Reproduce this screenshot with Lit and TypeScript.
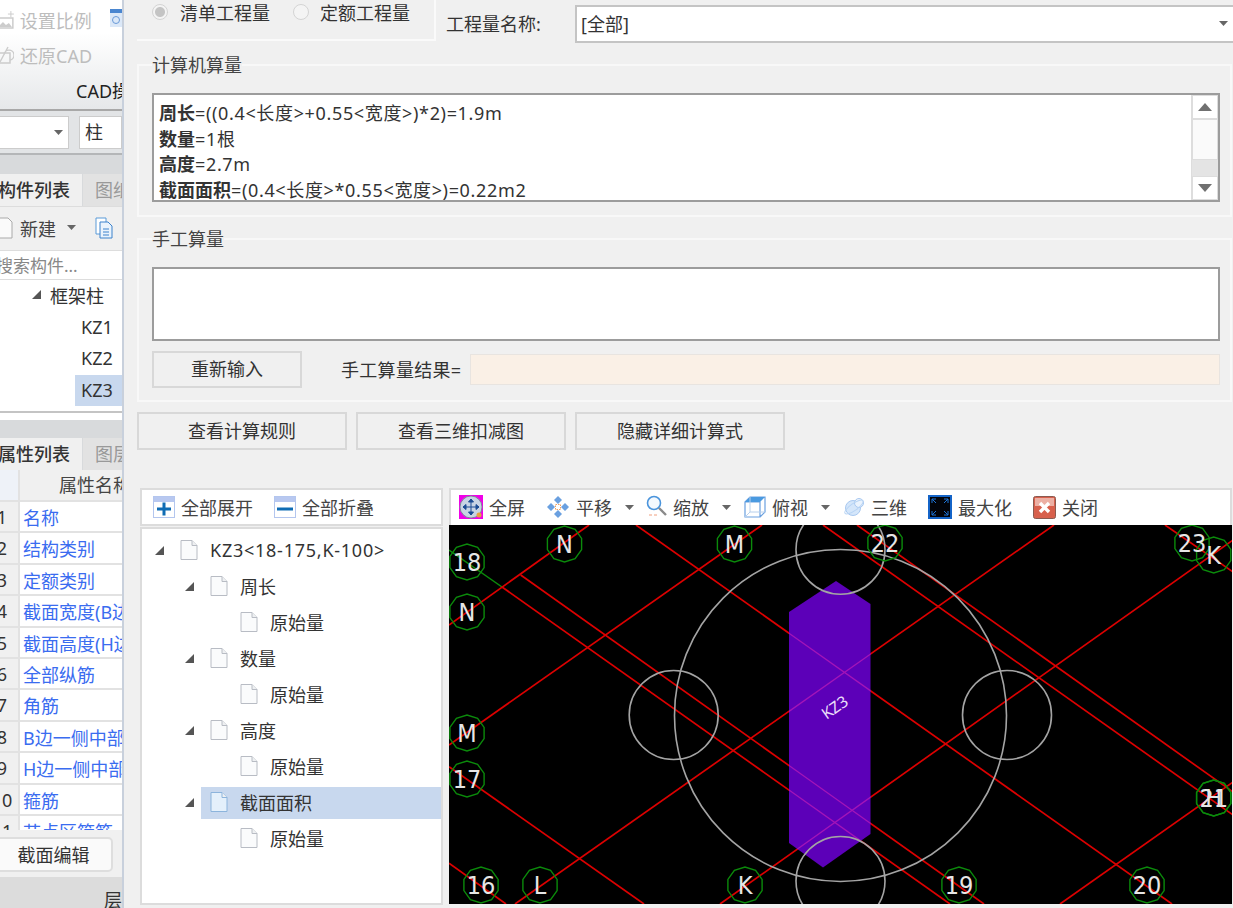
import { LitElement, css, html, svg } from "lit";
import { customElement } from "lit/decorators.js";

const FONT = css`"Noto Sans", "Noto Sans CJK SC", sans-serif`;

const doc = (blue = false) => html`<svg class="doc" width="18" height="22" viewBox="0 0 18 22">
  <path d="M1 1.5h11l5 5v14H1z" fill=${blue ? "#e4f0fb" : "#fafbfc"} stroke=${blue ? "#8cb4dc" : "#b8bcc4"} />
  <path d="M12 1.5v5h5" fill="#eef0f2" stroke=${blue ? "#8cb4dc" : "#b8bcc4"} />
</svg>`;

const arrow = html`<svg class="tri" width="11" height="11" viewBox="0 0 11 11"><path d="M1 10L10 1v9z" fill="#555" /></svg>`;
const drop = html`<svg class="drop" width="9" height="5" viewBox="0 0 9 5"><path d="M0 0h9L4.5 5z" fill="#666" /></svg>`;

@customElement("side-panel")
export class SidePanel extends LitElement {
  rows = [
    "名称", "结构类别", "定额类别", "截面宽度(B边)", "截面高度(H边)", "全部纵筋",
    "角筋", "B边一侧中部筋", "H边一侧中部筋", "箍筋", "节点区箍筋",
  ];

  render() {
    return html`
      <div class="ribbon">
        <div class="rrow">
          <svg width="14" height="20" viewBox="0 0 14 20"><path d="M-4 8h17v10H-4z" fill="none" stroke="#ccc" stroke-width="1.5" /><path d="M-2 17l5-5 3 3 3-2 3 4z" fill="#ccc" /><path d="M11 1v6M8 4h6" stroke="#ccc" /></svg>
          <span class="t">设置比例</span>
          <svg class="cal" width="12" height="18" viewBox="0 0 12 18"><path d="M0 0h14v18H0z" fill="#dbe8f8" /><path d="M0 0h14v4H0z" fill="#4a86d0" /><circle cx="6" cy="11" r="3.5" fill="none" stroke="#6a9ad8" /></svg>
        </div>
        <div class="rrow">
          <svg width="14" height="20" viewBox="0 0 14 20"><path d="M-3 8h13v10H-3z" fill="none" stroke="#ccc" stroke-width="1.5" /><path d="M8 2l-8 15M4 10a5 5 0 1 1 6 5" fill="none" stroke="#ccc" stroke-width="1.4" /></svg>
          <span class="t">还原CAD</span>
        </div>
        <div class="cap">CAD操作</div>
      </div>
      <div class="combos">
        <div class="combo first">${drop}</div>
        <div class="combo second">柱</div>
      </div>
      <div class="band"></div>
      <div class="tabs"><div class="tab on">构件列表</div><div class="tab">图纸管理</div></div>
      <div class="tools">
        <svg width="14" height="24" viewBox="0 0 14 24"><path d="M-4 2h12l4 4v16H-4z" fill="#fafafa" stroke="#aaa" /></svg>
        <span class="new">新建</span>${drop}
        <svg class="blue" width="18" height="22" viewBox="0 0 18 22"><path d="M1 1h10v16H1z" fill="#fff" stroke="#5b9bd8" /><path d="M5 5h8l4 4v12H5z" fill="#eaf3fc" stroke="#3c82cc" /><path d="M8 12h6M8 15h6M8 18h6" stroke="#3c82cc" /></svg>
      </div>
      <div class="search">搜索构件...</div>
      <div class="tree">
        <div class="node lv1">${arrow}<span>框架柱</span></div>
        <div class="node lv2"><span>KZ1</span></div>
        <div class="node lv2"><span>KZ2</span></div>
        <div class="node lv2"><span class="sel">KZ3</span></div>
      </div>
      <div class="band low"></div>
      <div class="tabs"><div class="tab on">属性列表</div><div class="tab">图层管理</div></div>
      <div class="table">
        <div class="idx head"></div>
        <div class="hname">属性名称</div>
        ${this.rows.map(
          (r, i) => html`<div class="idx">${i + 1}</div><div class="name">${r}</div>`,
        )}
      </div>
      <div class="actions"><div class="edit">截面编辑</div></div>
      <div class="foot">层间复制</div>
    `;
  }

  static styles = css`
    :host {
      display: block;
      width: 122px;
      height: 908px;
      overflow: hidden;
      background: #f0f0f0;
      font-family: ${FONT};
      font-size: 18px;
      color: #333;
      white-space: nowrap;
    }
    .ribbon {
      height: 109px;
      padding-top: 2px;
      box-sizing: border-box;
      background: linear-gradient(#fff 30%, #e6e8ea);
      overflow: hidden;
    }
    .rrow {
      height: 35px;
      display: flex;
      align-items: center;
      gap: 6px;
    }
    .rrow .t {
      color: #bdbdbd;
      width: 85px;
    }
    .cal {
      flex: none;
      margin-top: -4px;
    }
    .cap {
      height: 36px;
      line-height: 38px;
      padding-left: 76px;
      color: #222;
    }
    .combos {
      height: 46px;
      box-sizing: border-box;
      border-top: 2px solid #a8a8a8;
      border-bottom: 2px solid #b4b6b8;
      padding: 5px 0 4px;
      background: #e2e4e6;
      display: flex;
      gap: 10px;
    }
    .combo {
      background: #fff;
      border: 1px solid #ccc;
      box-sizing: border-box;
      height: 33px;
      line-height: 30px;
    }
    .combo.first {
      width: 70px;
      margin-left: -1px;
      display: flex;
      align-items: center;
      justify-content: flex-end;
      padding-right: 5px;
    }
    .combo.second {
      flex: 1;
      padding-left: 5px;
    }
    .band {
      height: 19px;
      background: #d8dadc;
    }
    .band.low {
      height: 18px;
    }
    .tabs {
      height: 32px;
      display: flex;
      gap: 1px;
      background: #d8dadc;
      overflow: hidden;
    }
    .tab {
      width: 82px;
      flex: none;
      background: #f0f0f0;
      font-weight: 500;
      line-height: 32px;
      text-indent: -2px;
    }
    .tab:not(.on) {
      background: #e2e2e2;
      color: #999;
      font-weight: 400;
      text-indent: 12px;
    }
    .tools {
      height: 44px;
      border-top: 1px solid #ddd;
      box-sizing: border-box;
      display: flex;
      align-items: center;
      padding-bottom: 2px;
    }
    .new {
      margin: 0 11px 0 6px;
      color: #444;
    }
    .blue {
      margin-left: 19px;
    }
    .search {
      height: 30px;
      line-height: 29px;
      box-sizing: border-box;
      background: #fff;
      border-top: 1px solid #ddd;
      border-bottom: 1px solid #ddd;
      text-indent: -4px;
      font-size: 17px;
      color: #888;
    }
    .tree {
      height: 140px;
      box-sizing: border-box;
      background: #fff;
      border-bottom: 7px solid #fff;
      box-shadow: inset 0 -2px 0 #c4c4c4;
    }
    .node {
      height: 31.5px;
      display: flex;
      align-items: center;
    }
    .lv1 {
      padding-left: 31px;
      padding-bottom: 2px;
      box-sizing: border-box;
      gap: 8px;
    }
    .lv2 {
      padding-left: 75px;
    }
    .lv2 span {
      height: 31.5px;
      line-height: 31px;
      padding-left: 6px;
      flex: 1;
    }
    .lv2 .sel {
      background: #c8d8ee;
    }
    .table {
      height: 360px;
      width: 184px;
      margin-left: -14px;
      overflow: hidden;
      display: grid;
      grid-template-columns: 32px 150px;
      grid-auto-rows: 29.4px;
      grid-template-rows: 30px;
      gap: 2px;
      background: #e2e2e2;
    }
    .idx {
      background: #f0f0f0;
      text-align: center;
      line-height: 31px;
    }
    .idx.head {
      background: #eef2f8;
    }
    .hname {
      background: #f0f0f0;
      text-align: center;
      line-height: 30px;
      color: #444;
    }
    .name {
      background: #fff;
      color: #3a6cf0;
      padding-left: 3px;
      line-height: 32px;
      overflow: hidden;
    }
    .actions {
      height: 47px;
      padding-top: 7px;
      box-sizing: border-box;
      background: #f0f0f0;
    }
    .edit {
      width: 119px;
      height: 35px;
      margin-left: -6px;
      box-sizing: border-box;
      border: 2px solid #dedede;
      border-radius: 5px;
      background: #fafafa;
      text-align: center;
      line-height: 32px;
    }
    .foot {
      height: 31px;
      background: #dcdcdc;
      padding-left: 104px;
      line-height: 46px;
    }
  `;
}

const DIAG: [number, number, number, number][] = [
  [502, 587, 950, 904],
  [520.7, 575, 984, 904],
  [636, 525, 1172, 904],
  [449, 766.7, 644, 904],
  [449, 863.3, 506, 904],
  [857, 525, 1233, 792],
  [823, 525, 1233, 815],
  [1165, 525, 1233, 572],
  [449, 625, 589, 525],
  [449, 745, 762, 525],
  [515, 904, 1054, 525],
  [720, 904, 1233, 540],
  [1060, 904, 1233, 782],
];

const AXES: [string, number, number][] = [
  ["N", 564.5, 544], ["M", 734.5, 544], ["18", 467, 562], ["N", 467, 612],
  ["M", 467, 733], ["17", 467, 779], ["16", 481, 885], ["L", 540, 885],
  ["K", 745, 885], ["19", 959, 885], ["20", 1147, 885], ["21", 1213.7, 798],
  ["H", 1213.7, 798], ["22", 885, 543], ["23", 1192, 543], ["K", 1213.7, 555],
];

const ring = (cx: number, cy: number) =>
  Array.from({ length: 10 }, (_, i) => {
    const a = (i * Math.PI) / 5 + Math.PI / 10;
    return `${(cx + 18 * Math.cos(a)).toFixed(1)},${(cy + 18 * Math.sin(a)).toFixed(1)}`;
  }).join(" ");

const COLUMN = "836,581 870.5,604 870.5,834 823,867.5 789,843 789,612";

@customElement("cad-view")
export class CadView extends LitElement {
  render() {
    const lines = DIAG.map(
      ([a, b, c, d]) => svg`<line x1=${a} y1=${b} x2=${c} y2=${d} />`,
    );
    return html`<svg width="783" height="379" viewBox="449 525 783 379">
      <defs><clipPath id="col"><polygon points=${COLUMN} /></clipPath></defs>
      <rect x="449" y="525" width="783" height="379" fill="#000" />
      <line x1="449" y1="550" x2="502" y2="587" stroke="#0b8a0b" stroke-width="1.5" />
      <g stroke="#dc0000" stroke-width="1.7">${lines}</g>
      <polygon points=${COLUMN} fill="#5c00b8" />
      <g stroke="#a414b8" stroke-width="1.3" clip-path="url(#col)">${lines}</g>
      <g fill="none" stroke="#a4a4a4" stroke-width="1.6">
        <circle cx="840.5" cy="715.5" r="166" />
        <circle cx="673.7" cy="715" r="44.5" />
        <circle cx="1007" cy="715" r="44.5" />
        <circle cx="840.5" cy="549.7" r="44.5" />
        <circle cx="840.5" cy="881" r="44.5" />
      </g>
      <g fill="none" stroke="#0b8a0b" stroke-width="1.4">
        ${AXES.map(([, x, y]) => svg`<polygon points=${ring(x, y)} />`)}
      </g>
      <g class="axis">
        ${AXES.map(([t, x, y]) => svg`<text x=${x} y=${y + 9}>${t}</text>`)}
      </g>
      <text class="mark" transform="translate(838 712) rotate(-35)">KZ3</text>
    </svg>`;
  }

  static styles = css`
    :host {
      display: block;
      height: 379px;
      background: #000;
    }
    svg {
      display: block;
    }
    .axis text {
      font-family: "DejaVu Sans Condensed", "DejaVu Sans", sans-serif;
      font-size: 25px;
      fill: #e6e6e6;
      text-anchor: middle;
    }
    .mark {
      font-family: "Noto Sans", sans-serif;
      font-size: 16px;
      fill: #e8dcf8;
      text-anchor: middle;
    }
  `;
}

const TREE: [string, number, boolean][] = [
  ["KZ3<18-175,K-100>", 0, true],
  ["周长", 1, true],
  ["原始量", 2, false],
  ["数量", 1, true],
  ["原始量", 2, false],
  ["高度", 1, true],
  ["原始量", 2, false],
  ["截面面积", 1, true],
  ["原始量", 2, false],
];

@customElement("app-root")
export class AppRoot extends LitElement {
  private formula() {
    return html`
      <div><b>周长</b>=((0.4&lt;长度&gt;+0.55&lt;宽度&gt;)*2)=1.9m</div>
      <div><b>数量</b>=1根</div>
      <div><b>高度</b>=2.7m</div>
      <div><b>截面面积</b>=(0.4&lt;长度&gt;*0.55&lt;宽度&gt;)=0.22m2</div>
    `;
  }

  private treeRows() {
    return TREE.map(([label, depth, open], i) => {
      const sel = i === 7;
      return html`<div class="row ${sel ? "sel" : ""} d${depth}">
        <span class="tw">${open ? arrow : ""}</span>${doc(sel)}<span class="lb">${label}</span>
      </div>`;
    });
  }

  render() {
    return html`
      <side-panel></side-panel>
      <div class="split"></div>
      <main>
        <div class="top">
          <div class="radios">
            <span class="radio on"></span><span>清单工程量</span>
            <span class="radio"></span><span>定额工程量</span>
          </div>
          <label>工程量名称:</label>
          <div class="select"><span>[全部]</span>${drop}</div>
        </div>

        <fieldset>
          <legend>计算机算量</legend>
          <div class="memo">
            <div class="lines">${this.formula()}</div>
            <div class="scroll">
              <div class="sb"><i class="up"></i></div>
              <div class="thumb"></div>
              <div class="rest"></div>
              <div class="sb"><i class="down"></i></div>
            </div>
          </div>
        </fieldset>

        <fieldset class="manual">
          <legend>手工算量</legend>
          <div class="entry"></div>
          <div class="result">
            <button class="reset">重新输入</button>
            <span class="rl">手工算量结果=</span>
            <div class="rv"></div>
          </div>
        </fieldset>

        <div class="btns">
          <button>查看计算规则</button>
          <button>查看三维扣减图</button>
          <button>隐藏详细计算式</button>
        </div>

        <div class="lower">
          <section class="left">
            <div class="bar tb">
              <span class="it">
                <svg width="22" height="22" viewBox="0 0 22 22"><rect x=".5" y=".5" width="21" height="21" fill="#fff" stroke="#b4c6ee" /><rect x="1" y="1" width="20" height="5" fill="#b8c8f0" /><path d="M4 13h14M11 6.500v13" stroke="#0f6cb4" stroke-width="3" /></svg>
                全部展开
              </span>
              <span class="it">
                <svg width="22" height="22" viewBox="0 0 22 22"><rect x=".5" y=".5" width="21" height="21" fill="#fff" stroke="#b4c6ee" /><rect x="1" y="1" width="20" height="5" fill="#b8c8f0" /><path d="M3 13h16" stroke="#0f6cb4" stroke-width="3" /></svg>
                全部折叠
              </span>
            </div>
            <div class="treebox">${this.treeRows()}</div>
          </section>
          <section class="right">
            <div class="bar cb">
              <span class="it w1">
                <svg width="24" height="24" viewBox="0 0 24 24"><rect width="24" height="24" fill="#f000e8" /><circle cx="12" cy="12" r="11" fill="#c8d4e4" stroke="#7c8898" /><path d="M12 4v16M4 12h16M12 4l-2.500 3h5zM12 20l-2.500-3h5zM4 12l3-2.500v5zM20 12l-3-2.500v5z" fill="#1c4c94" stroke="#1c4c94" /><circle cx="20" cy="20" r="2.500" fill="#e8a040" /></svg>
                全屏
              </span>
              <span class="it w2">
                <svg width="24" height="24" viewBox="0 0 24 24"><path d="M12 1l4 4-4 4-4-4zM12 15l4 4-4 4-4-4zM1 12l4-4 4 4-4 4zM15 12l4-4 4 4-4 4z" fill="#6aa0e0" /><rect x="9.500" y="9.500" width="5" height="5" fill="none" stroke="#f0a060" stroke-dasharray="1.500 1" /></svg>
                平移${drop}
              </span>
              <span class="it w2">
                <svg width="22" height="24" viewBox="0 0 22 24"><circle cx="9" cy="8" r="6.500" fill="#f4f9fe" stroke="#4a94dc" stroke-width="1.600" /><path d="M14 13l7 7" stroke="#8a8a8a" stroke-width="2.400" /><path d="M4 20h3M9 20h3" stroke="#f0a080" /></svg>
                缩放${drop}
              </span>
              <span class="it w2">
                <svg width="22" height="22" viewBox="0 0 22 22"><path d="M1 6h15v15H1zM1 6l5-5h15v15l-5 5" fill="#fff" stroke="#6aa0e0" stroke-width="1.200" /><path d="M1 6l5-5h15l-5 5z" fill="#4a9ae0" /><path d="M6 1v15h15M6 16l-5 5" fill="none" stroke="#b8d0ec" /></svg>
                俯视${drop}
              </span>
              <span class="it w3">
                <svg width="22" height="22" viewBox="0 0 22 22"><circle cx="10" cy="12" r="7.500" fill="#d4e6fa" stroke="#a8c8f0" /><circle cx="16" cy="7" r="4.500" fill="#eaf3fd" stroke="#a8c8f0" /><ellipse cx="11" cy="11" rx="11" ry="3.500" transform="rotate(-35 11 11)" fill="none" stroke="#b8d4f4" /></svg>
                三维
              </span>
              <span class="it w4">
                <svg width="24" height="24" viewBox="0 0 24 24"><rect width="24" height="24" fill="#1464c8" /><rect x="2" y="2" width="20" height="20" fill="#02040a" /><path d="M4 4l4 4M4 4h4M4 4v4M20 4l-4 4M20 4h-4M20 4v4M4 20l4-4M4 20h4M4 20v-4M20 20l-4-4M20 20h-4M20 20v-4" stroke="#1c74d8" /></svg>
                最大化
              </span>
              <span class="it">
                <svg width="23" height="23" viewBox="0 0 23 23"><rect x=".5" y=".5" width="22" height="22" rx="2" fill="#d8604c" stroke="#8a5a50" /><rect x="2" y="2" width="19" height="8" fill="#ecb0a4" /><path d="M7 7l9 9M16 7l-9 9" stroke="#fff" stroke-width="3.400" /></svg>
                关闭
              </span>
            </div>
            <cad-view></cad-view>
          </section>
        </div>
      </main>
    `;
  }

  static styles = css`
    :host {
      display: flex;
      width: 1233px;
      height: 908px;
      overflow: hidden;
      background: #f0f0f0;
      font-family: ${FONT};
      font-size: 18px;
      color: #333;
    }
    .split {
      width: 2px;
      flex: none;
      background: #c8d0dc;
    }
    main {
      width: 1096px;
      flex: none;
      margin-left: 13px;
    }
    .top {
      height: 43px;
      display: flex;
      align-items: flex-start;
      margin-bottom: 9px;
    }
    .radios {
      width: 299px;
      height: 41px;
      flex: none;
      box-sizing: border-box;
      border-right: 2px solid #fafafa;
      border-bottom: 2px solid #fafafa;
      padding: 0 0 15px 15px;
      display: flex;
      align-items: center;
    }
    .radio {
      width: 16px;
      height: 16px;
      box-sizing: border-box;
      border: 1px solid #d4d4d4;
      border-radius: 50%;
      margin-right: 12px;
      background: #f4f4f4;
    }
    .radio.on {
      margin-right: 12px;
      background: radial-gradient(circle, #c4c4c4 0 4.500px, #f4f4f4 5.500px);
    }
    .radio:not(.on) {
      margin-left: 23px;
      margin-right: 11px;
    }
    label {
      width: 129px;
      flex: none;
      margin-left: 10px;
      line-height: 49px;
    }
    .select {
      flex: 1;
      height: 38px;
      margin-top: 5px;
      box-sizing: border-box;
      background: #fff;
      border: 2px solid #c4c4c4;
      border-right: 0;
      padding: 0 5px 2px 4px;
      display: flex;
      align-items: center;
      justify-content: space-between;
    }
    fieldset {
      margin: 0 1px 0 0;
      padding: 15px 10px 13px 13px;
      border: 2px solid #f8f8f8;
      height: 165px;
      box-sizing: border-box;
      min-width: 0;
    }
    legend {
      padding: 0;
      margin-left: 0;
      line-height: 26px;
      background: #f0f0f0;
      color: #444;
    }
    .manual {
      margin-top: 9px;
      height: 176px;
    }
    .memo {
      height: 109px;
      box-sizing: border-box;
      border: 2px solid #9c9c9c;
      background: #fff;
      display: flex;
      justify-content: space-between;
    }
    .lines {
      padding: 6px 0 0 5px;
      line-height: 25.500px;
      overflow: hidden;
      white-space: nowrap;
      letter-spacing: 0.65px;
    }
    .lines b {
      letter-spacing: 0;
    }
    .scroll {
      width: 26px;
      flex: none;
      display: flex;
      flex-direction: column;
      background: #e4e4e4;
      border-left: 1px solid #ddd;
    }
    .sb {
      height: 24px;
      flex: none;
      background: #fff;
      border: 1px solid #ddd;
      box-sizing: border-box;
      display: flex;
      align-items: center;
      justify-content: center;
    }
    .thumb {
      height: 41px;
      flex: none;
      background: #fafafa;
      border: 1px solid #ddd;
      box-sizing: border-box;
    }
    .rest {
      flex: 1;
    }
    .sb i {
      width: 0;
      height: 0;
      border-left: 7px solid transparent;
      border-right: 7px solid transparent;
    }
    .up {
      border-bottom: 8px solid #707070;
    }
    .down {
      border-top: 8px solid #707070;
    }
    .entry {
      height: 74px;
      box-sizing: border-box;
      border: 2px solid #9c9c9c;
      background: #fff;
    }
    .result {
      margin-top: 10px;
      height: 37px;
      display: flex;
      align-items: center;
    }
    button {
      font: inherit;
      color: #333;
      width: 210px;
      height: 38px;
      padding: 0 0 2px;
      box-sizing: border-box;
      background: #f0f0f0;
      border: 2px solid #d8d8d8;
    }
    .reset {
      width: 150px;
      height: 37px;
      padding-bottom: 3px;
    }
    .rl {
      margin-left: 39px;
      margin-top: -2px;
      width: 129px;
      flex: none;
      white-space: nowrap;
      letter-spacing: 0.3px;
    }
    .rv {
      flex: 1;
      height: 31px;
      box-sizing: border-box;
      background: #faf0e6;
      border: 1px solid #e8e4e0;
    }
    .btns {
      display: flex;
      gap: 9px;
      margin-top: 10px;
    }
    .lower {
      margin-top: 38px;
      padding-left: 3px;
      height: 417px;
      display: flex;
      gap: 6px;
    }
    .left {
      width: 303px;
      flex: none;
      display: flex;
      flex-direction: column;
      gap: 1px;
    }
    .right {
      width: 783px;
      flex: none;
    }
    .bar {
      background: #fff;
      display: flex;
      align-items: center;
      box-sizing: border-box;
      white-space: nowrap;
      color: #444;
    }
    .tb {
      height: 38px;
      border: 2px solid #dcdcdc;
      padding: 0 0 1px 11px;
      gap: 21px;
    }
    .cb {
      height: 37px;
      border: 2px solid #dcdcdc;
      border-bottom: 0;
      padding: 0 0 1px 8px;
    }
    .it {
      display: inline-flex;
      align-items: center;
      gap: 6px;
      flex: none;
    }
    .it .drop {
      margin-left: 7px;
    }
    .w1 {
      width: 87px;
    }
    .w2 {
      width: 99px;
    }
    .w3 {
      width: 85px;
    }
    .w4 {
      width: 105px;
    }
    .treebox {
      flex: 1;
      min-height: 0;
      background: #fff;
      border: 2px solid #dcdcdc;
      padding-top: 3px;
      box-sizing: border-box;
    }
    .row {
      height: 36px;
      display: flex;
      align-items: center;
      white-space: nowrap;
    }
    .row .doc {
      flex: none;
    }
    .row.sel {
      background: linear-gradient(#c8d8ee, #c8d8ee) 59px 3px / 100% 32px no-repeat;
    }
    .tw {
      width: 12px;
      flex: none;
      display: flex;
      margin-right: 14px;
    }
    .lb {
      margin-left: 12px;
    }
    .d0 .lb {
      letter-spacing: 0.75px;
    }
    .d0 {
      padding-left: 12px;
    }
    .d1 {
      padding-left: 42px;
    }
    .d2 {
      padding-left: 72px;
    }
  `;
}
